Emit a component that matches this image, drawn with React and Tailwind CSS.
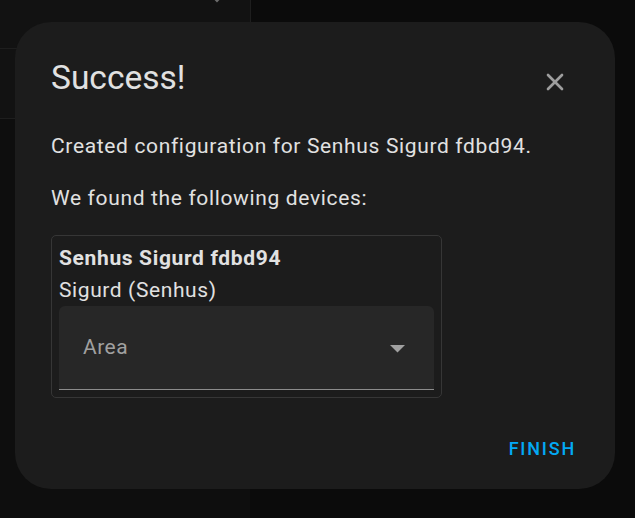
import { X } from 'lucide-react';

const font = { fontFamily: 'Roboto, "Noto Sans", sans-serif' };

const Backdrop = () => (
  <div className="absolute inset-0">
    <div className="absolute left-0 top-0 w-[250px] h-[118px] bg-[#121212]" />
    <div className="absolute left-0 top-[48px] w-[250px] h-px bg-[#1e1e1e]" />
    <div className="absolute left-0 top-[118px] w-[250px] h-px bg-[#1e1e1e]" />
    <div className="absolute left-[250px] top-0 w-px h-[48px] bg-[#1e1e1e]" />
    <div className="absolute left-0 top-[119px] w-[250px] h-[400px] bg-[#0e0e0e]" />
    <svg className="absolute left-[212px] top-[-4px]" width="10" height="8" viewBox="0 0 10 8">
      <path d="M1 1 L5 5 L9 1" stroke="#6b6b6b" strokeWidth="2" fill="none" />
    </svg>
  </div>
);

export default function App() {
  return (
    <div className="relative w-[635px] h-[518px] overflow-hidden bg-[#0b0b0b]" style={font}>
      <Backdrop />
      <div className="relative ml-[15px] pt-[22px]">
        <div className="w-[600px] h-[467px] rounded-[36px] bg-[#1c1c1c] flex flex-col pl-[36px] pr-[36px] pt-[36px] text-[#e1e1e1]">
          <div className="flex justify-between items-start">
            <h2 className="text-[33.5px] leading-[40px] font-normal">Success!</h2>
            <button className="w-12 h-12 flex items-center justify-center text-[#9e9e9e]">
              <X className="w-[28px] h-[28px]" strokeWidth={2.3} />
            </button>
          </div>

          <p className="mt-[28px] text-[21px] leading-[25px] tracking-[0.65px]">
            Created configuration for Senhus Sigurd fdbd94.
          </p>
          <p className="mt-[27px] text-[21px] leading-[25px] tracking-[0.65px]">
            We found the following devices:
          </p>

          <div className="mt-[24px] w-[391px] border border-[#363636] rounded-[5px] pt-[10px] px-[7px] pb-[7px]">
            <div className="text-[21px] leading-[25px] font-bold tracking-[0.65px]">Senhus Sigurd fdbd94</div>
            <div className="mt-[7px] text-[21px] leading-[25px] tracking-[0.6px]">Sigurd (Senhus)</div>
            <div className="mt-[3px] h-[84px] bg-[#272727] rounded-t-[6px] border-b border-[#8c8c8c] flex items-center justify-between pl-[24px] pr-[29px]">
              <span className="text-[21px] leading-[25px] text-[#a0a0a0] tracking-[0.5px]">Area</span>
              <svg className="mt-[2px]" width="15" height="8" viewBox="0 0 15 8">
                <path d="M0 0 L15 0 L7.5 7.5 Z" fill="#a0a0a0" />
              </svg>
            </div>
          </div>

          <div className="mt-auto flex justify-end pb-[30px] pr-[3px]">
            <button className="text-[18px] leading-[20px] font-medium tracking-[1.8px] text-[#03a9f4]">
              FINISH
            </button>
          </div>
        </div>
      </div>
    </div>
  );
}
